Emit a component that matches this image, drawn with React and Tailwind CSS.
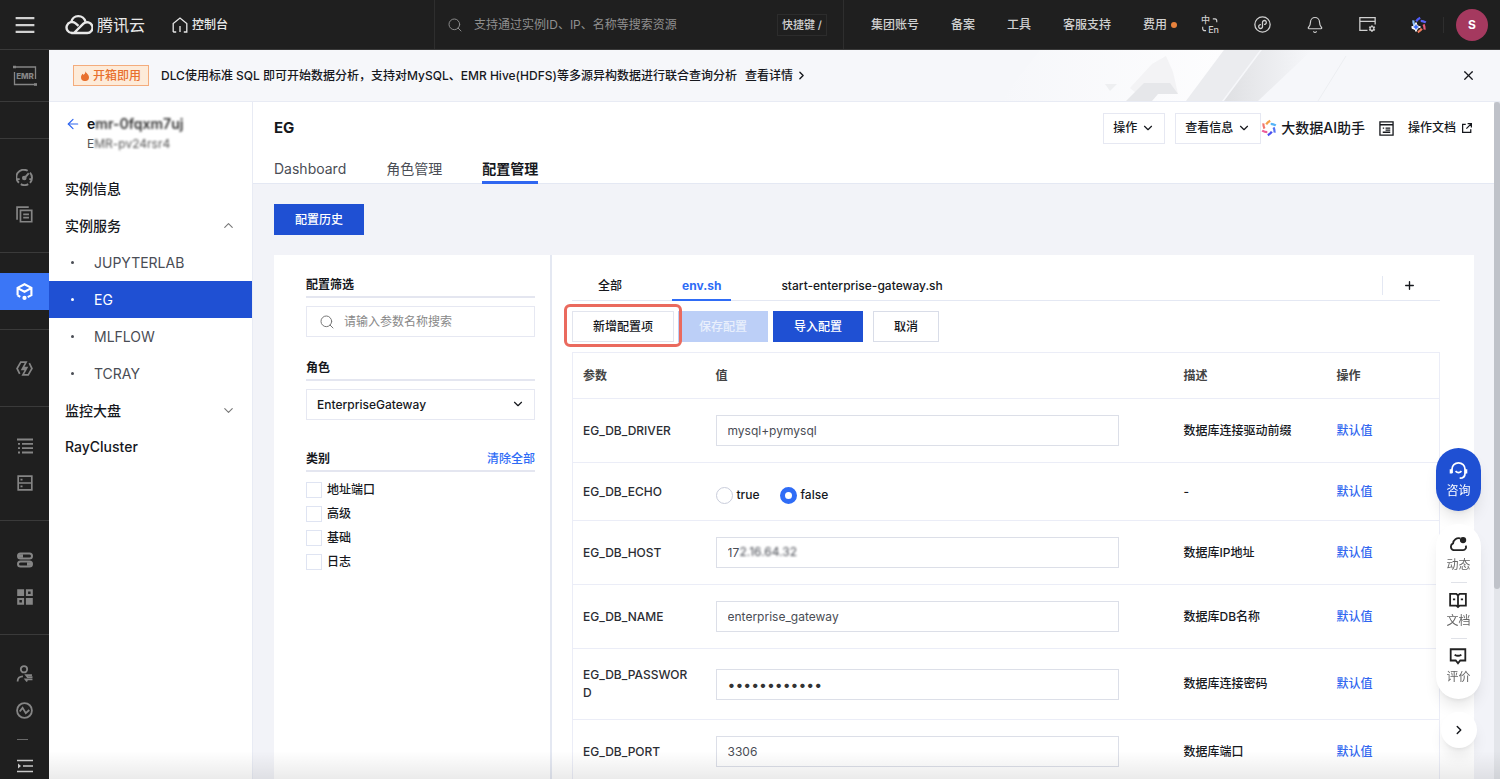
import { useState } from "react";
import {
  ArrowLeft,
  Bell,
  ChevronDown,
  ChevronRight,
  ChevronUp,
  Plus,
  Search,
  X,
} from "lucide-react";

const topLinks = ["集团账号", "备案", "工具", "客服支持"];

const services = ["JUPYTERLAB", "EG", "MLFLOW", "TCRAY"];

const categories = ["地址端口", "高级", "基础", "日志"];

const params = [
  { name: "EG_DB_DRIVER", value: "mysql+pymysql", desc: "数据库连接驱动前缀" },
  { name: "EG_DB_ECHO", type: "radio", desc: "-" },
  { name: "EG_DB_HOST", type: "masked", value: "172.16.64.32", desc: "数据库IP地址" },
  { name: "EG_DB_NAME", value: "enterprise_gateway", desc: "数据库DB名称" },
  { name: "EG_DB_PASSWORD", type: "password", value: "abcdefghijkl", desc: "数据库连接密码" },
  { name: "EG_DB_PORT", value: "3306", desc: "数据库端口" },
];

function Icon({ size = 16, width = 1.5, className, children }) {
  return (
    <svg
      width={size}
      height={size}
      viewBox="0 0 16 16"
      fill="none"
      stroke="currentColor"
      strokeWidth={width}
      className={className}
      aria-hidden="true"
    >
      {children}
    </svg>
  );
}

function CloudLogo() {
  return (
    <svg width="28" height="21" viewBox="0 0 28 21" fill="none" stroke="currentColor" strokeWidth="2.4" aria-hidden="true">
      <path d="M7 19a5.5 5.5 0 1 1 3.6-9.7L13.500 11.800" />
      <path d="M6.200 8.200a7.300 7.300 0 0 1 14.300-.4" />
      <path d="M9 19 18.400 9.700a5.400 5.400 0 1 1 3.200 9.300H6.600" />
    </svg>
  );
}

function HomeIcon() {
  return (
    <Icon size={16} width={1.3}>
      <path d="M1.200 15V6.500L8 1l6.800 5.500V15h-3M1.200 15h3M8 15V9" />
    </Icon>
  );
}

function AiIcon({ dark }) {
  const colors = dark
    ? ["#4f5bf5", "#5a62f7", "#e85a78", "#f07a5a", "#ffffff", "#8fc4ff"]
    : ["#f4a04a", "#55b4f7", "#5573f2", "#4a4ff0", "#ee5c98", "#f2766c"];
  return (
    <svg width="16" height="18" viewBox="0 0 16 18" fill="none" strokeWidth="2.2" aria-hidden="true">
      {colors.map((color, i) => (
        <path
          key={i}
          d="M5.200 5.400Q6.500 3.200 9.200 1.800"
          stroke={color}
          transform={`rotate(${i * 60} 8 9)`}
        />
      ))}
      {dark ? (
        <path
          d="M5 6.500 6.300 9.700 9.500 11 6.300 12.300 5 15.500 3.700 12.300.5 11 3.700 9.700Z"
          fill="#3a6cf8"
          stroke="#fff"
          strokeWidth="1"
        />
      ) : null}
    </svg>
  );
}

const railSections = [
  [
    {
      label: "概览",
      icon: (
        <Icon size={17} width={1.800}>
          <path d="M2.800 13A7 7 0 0 1 11 1.700M13.200 3.500a7 7 0 0 1 0 9.500M4.500 14.200a7 7 0 0 0 7 0M1 9.500h2.500M12.500 9.500H15" />
          <circle cx="7.800" cy="8.500" r="1.300" fill="currentColor" />
          <path d="M8.500 7.800 12 4" />
        </Icon>
      ),
    },
    {
      label: "文档",
      icon: (
        <Icon size={17} width={1.600}>
          <path d="M1 13V1h11M4.200 4.200h10.600v10.600H4.200ZM6.800 7.800h5.400M6.800 11h5.400" />
        </Icon>
      ),
    },
  ],
  [
    {
      label: "集群",
      active: true,
      icon: (
        <Icon size={17} width={2}>
          <path d="M1.500 11.500V4.500L8 1.200l6.500 3.300v7L11 13.300M1.500 11.500 4 13M2 5l6 3.200L14 5" />
          <circle cx="8" cy="14" r="1" fill="currentColor" />
        </Icon>
      ),
    },
  ],
  [
    {
      label: "作业",
      icon: (
        <Icon size={17} width={1.600}>
          <path d="M3.500 13 1 8l3.500-6h5L5.800 8.800h3M12.500 3 15 8l-3.500 6h-5l3.700-6.800h-3" />
        </Icon>
      ),
    },
  ],
  [
    {
      label: "列表",
      icon: (
        <Icon size={16} width={1.800}>
          <path d="M0 1.500h16M5 5.800h11M5 10.200h11M5 14.500h11M1 5.800h2M1 10.200h2M1 14.500h2" />
        </Icon>
      ),
    },
    {
      label: "存储",
      icon: (
        <Icon size={16} width={1.700}>
          <path d="M1.200 1.200h13.600v13.600H1.200ZM1.200 8h13.600M3.500 4.600h2M3.500 11.400h2" />
        </Icon>
      ),
    },
  ],
  [
    {
      label: "开关",
      icon: (
        <Icon size={16} width={2}>
          <rect x="1" y="1.500" width="14" height="5" rx="2.500" />
          <rect x="1" y="9.500" width="14" height="5" rx="2.500" />
          <path d="M2 4h4M10 12h4" strokeWidth="3.500" />
        </Icon>
      ),
    },
    {
      label: "组件",
      icon: (
        <Icon size={16} width={2.200}>
          <path d="M1.300 1.300h4.700v4.700H1.300ZM10 10h4.700v4.700H10Z" fill="currentColor" />
          <path d="M10 1.300h4.700v4.700H10ZM1.300 10h4.700v4.700H1.300Z" />
        </Icon>
      ),
    },
  ],
  [
    {
      label: "用户",
      icon: (
        <Icon size={17} width={1.700}>
          <circle cx="7.500" cy="4" r="3" />
          <path d="M1.500 15.500c0-3 2-4.800 5-4.800M15 9.500H9.500l1.500 2h4.500M15.500 13.500H9l1.500 2" />
        </Icon>
      ),
    },
    {
      label: "监控",
      icon: (
        <Icon size={17} width={1.700}>
          <circle cx="8" cy="8" r="7" />
          <path d="M3.500 9 6.200 5.500 9.200 10.500 12.500 7.500" />
        </Icon>
      ),
    },
  ],
];

function TopBar() {
  return (
    <header className="flex h-[50px] shrink-0 items-center border-b border-[#3a3a3a] bg-[#1f1f1f] text-xs font-medium text-[#d0d0d0]">
      <div className="flex h-full w-[435px] shrink-0 items-center border-r border-[#2e2e2e]">
        <button type="button" aria-label="菜单" className="flex w-[49px] justify-center">
          <Icon size={20} width={1.800}>
            <path d="M.5 2.500h15M.5 8h15M.5 13.500h15" />
          </Icon>
        </button>
        <a href="#home" className="ml-4 flex items-center gap-1 text-[#e8e8e8]">
          <CloudLogo />
          <span className="text-base font-normal">腾讯云</span>
        </a>
        <a href="#console" className="ml-[27px] flex items-center gap-1 text-[#e8e8e8]">
          <HomeIcon />
          控制台
        </a>
      </div>
      <label className="flex h-full flex-1 items-center border-r border-[#2e2e2e] pr-4 pl-3">
        <Search size={16} strokeWidth={1.500} className="text-[#8a8a8a]" />
        <input
          aria-label="搜索资源"
          placeholder="支持通过实例ID、IP、名称等搜索资源"
          className="ml-[11px] min-w-0 flex-1 bg-transparent font-normal outline-none placeholder:text-[#8f8f8f]"
        />
        <kbd className="border border-[#2c2c2c] px-1 py-[2px] font-[inherit] text-[11px] leading-4">快捷键 /</kbd>
      </label>
      <nav className="flex shrink-0 items-center gap-8 pl-[27px] whitespace-nowrap">
        {topLinks.map((link) => (
          <a key={link} href="#nav">
            {link}
          </a>
        ))}
        <a href="#fee" className="flex items-center gap-1">
          费用
          <span className="size-[6px] rounded-full bg-[#e8823c]" />
        </a>
      </nav>
      <div className="ml-6 flex shrink-0 items-center pr-3">
        <div className="flex items-center gap-[35px]">
          <button type="button" aria-label="切换语言" className="relative size-[18px]">
            <span className="absolute -top-[2px] left-0 text-[9px] leading-3">中</span>
            <span className="absolute right-0 -bottom-[2px] text-[9px] leading-3">En</span>
            <Icon size={18} width={1} className="absolute inset-0">
              <path d="M10.500 2.500h2q1.500 0 1.500 2v1M1.500 9.500v1.500q0 2 2 2h1" />
            </Icon>
          </button>
          <button type="button" aria-label="小程序">
            <Icon size={17} width={1.200}>
              <circle cx="8" cy="8" r="7.200" />
              <path d="M6.500 8.200A1.800 1.800 0 1 0 8 10V6a1.800 1.800 0 1 1 1.500 1.800" />
            </Icon>
          </button>
          <button type="button" aria-label="消息">
            <Bell size={18} strokeWidth={1.600} />
          </button>
          <button type="button" aria-label="设置">
            <Icon size={17} width={1.200}>
              <path d="M8 13.500H.8v-12h14.400V8M.8 5h14.400" />
              <circle cx="12.200" cy="11.800" r="1.800" />
              <path d="M12.200 8.800V10M12.200 13.600v1.400M9.500 10.200l1 .6M14 12.800l1 .6M9.500 13.400l1-.6M14 10.800l1-.6" />
            </Icon>
          </button>
          <button type="button" aria-label="AI 助手">
            <AiIcon dark />
          </button>
        </div>
        <span className="mr-3 ml-4 h-4 w-px bg-[#2e2e2e]" />
        <button
          type="button"
          aria-label="账号"
          className="flex size-8 items-center justify-center rounded-full bg-[#a5395f] font-bold text-white"
        >
          S
        </button>
      </div>
    </header>
  );
}

function Rail() {
  return (
    <aside className="flex w-[49px] shrink-0 flex-col bg-[#1f1f1f] text-[#858585]">
      <div className="flex h-[52px] shrink-0 items-center justify-center border-b border-[#3a3a3a]">
        <svg width="24" height="22" viewBox="0 0 24 22" fill="none" stroke="currentColor" strokeWidth="1.300" aria-hidden="true">
          <path d="M0 2h22.500v12M1.500 7v12.500H24" />
          <path d="M0 2h3M21 19.500h3" strokeWidth="2.500" />
          <text x="12" y="14" textAnchor="middle" fill="currentColor" stroke="none" fontSize="8" fontWeight="800">
            EMR
          </text>
        </svg>
      </div>
      <div className="h-[37px] shrink-0 border-b border-[#3a3a3a]" />
      {railSections.map((section, i) => (
        <div
          key={i}
          className="shrink-0 border-b border-[#3a3a3a] pt-5 pb-[19px] last-of-type:border-0 last-of-type:pb-[10px]"
        >
          {section.map((item) => (
            <button
              key={item.label}
              type="button"
              aria-label={item.label}
              className={
                item.active
                  ? "flex h-[37px] w-full items-center justify-center bg-[#3b76f6] text-white"
                  : "flex h-[37px] w-full items-center justify-center"
              }
            >
              {item.icon}
            </button>
          ))}
        </div>
      ))}
      <span className="ml-[17px] h-px w-[11px] shrink-0 bg-[#6a6a6a]" />
      <button type="button" aria-label="展开" className="mt-[18px] flex shrink-0 justify-center text-[#c8c8c8]">
        <Icon size={16} width={1.600}>
          <path d="M0 2.500h16M6 8h10M0 13.500h16" />
          <path d="M1 5.500v5L4 8Z" fill="currentColor" stroke="none" />
        </Icon>
      </button>
    </aside>
  );
}

function Banner({ onClose }) {
  return (
    <section className="relative flex h-[52px] shrink-0 items-center border-b border-[#e8ebf4] bg-[#f6f7fa] px-6 text-xs font-medium">
      <svg
        className="absolute inset-y-0 right-[120px]"
        width="380"
        height="51"
        viewBox="0 0 380 51"
        aria-hidden="true"
      >
        <defs>
          <linearGradient id="glow">
            <stop offset="0" stopColor="#f6f7fa" />
            <stop offset="1" stopColor="#fdfdfe" />
          </linearGradient>
          <linearGradient id="beam">
            <stop offset="0" stopColor="#dfe0e3" />
            <stop offset="1" stopColor="#f6f7fa" />
          </linearGradient>
        </defs>
        <path d="M40 0 0 51H186L224 0Z" fill="url(#glow)" />
        <path d="M130 38 152 14 166 6 173 22 178 44 160 36 146 51Z" fill="#f3f3f5" />
        <path d="m126 51 18-18h26l8 11h-20l-6 7Z" fill="#e6e7ea" />
        <path d="M105 34h12l-7 7Z" fill="#eeeff1" />
        <path d="M186 51 224 0h36L222 51Z" fill="#ebecef" />
        <path d="M224 51 262 0h50L258 51Z" fill="url(#beam)" />
        <path d="m318 51 28-45" stroke="#eceef1" />
      </svg>
      <span className="flex h-[21px] items-center gap-1 border border-[#f4ac7c] bg-[#fdebd9] px-[7px] text-[#e8702e]">
        <svg width="8" height="10" viewBox="0 0 8 10" fill="currentColor" aria-hidden="true">
          <path d="M4.500 0c0 2 3.500 3.200 3.500 6.200A3.900 3.900 0 0 1 4 10 3.900 3.900 0 0 1 0 6.200C0 4.500 1 3.500 1.500 2.700c.6.3.9.800 1 1.300C3.600 3.200 4.500 2 4.500 0Z" />
        </svg>
        开箱即用
      </span>
      <p className="ml-3 whitespace-nowrap">
        DLC使用标准 SQL 即可开始数据分析，支持对MySQL、EMR Hive(HDFS)等多源异构数据进行联合查询分析
      </p>
      <a href="#detail" className="ml-2 flex items-center gap-[2px] whitespace-nowrap">
        查看详情
        <ChevronRight size={13} strokeWidth={2.500} />
      </a>
      <button type="button" aria-label="关闭" onClick={onClose} className="relative ml-auto">
        <X size={15} strokeWidth={2} />
      </button>
    </section>
  );
}

function SideNav() {
  const [service, setService] = useState("EG");

  return (
    <nav className="w-[204px] shrink-0 border-r border-[#e8ebf4] bg-white text-sm">
      <div className="flex h-[68px] gap-[6px] pt-[13px] pl-4">
        <a href="#back" aria-label="返回" className="mt-[1px] text-[#2f66f0]">
          <ArrowLeft size={16} strokeWidth={1.800} />
        </a>
        <div>
          <p className="text-[14px] leading-[18px] font-semibold">
            e<span className="text-[#333] blur-[1px]">mr-0fqxm7uj</span>
          </p>
          <p className="text-xs leading-[22px] text-[#555]">
            E<span className="blur-[1px]">MR-pv24rsr4</span>
          </p>
        </div>
      </div>
      <a href="#info" className="flex h-[37px] items-center px-4 font-medium">
        实例信息
      </a>
      <button type="button" className="flex h-[37px] w-full items-center justify-between px-4 font-medium">
        实例服务
        <ChevronUp size={15} strokeWidth={1.800} className="text-[#777]" />
      </button>
      {services.map((name) => (
        <button
          key={name}
          type="button"
          onClick={() => setService(name)}
          className={
            name === service
              ? "flex h-[37px] w-full items-center gap-5 bg-[#1f50d3] pl-[22px] text-white"
              : "flex h-[37px] w-full items-center gap-5 pl-[22px] text-[#4a4d55]"
          }
        >
          <span className="size-[3px] rounded-full bg-current" />
          {name}
        </button>
      ))}
      <button type="button" className="flex h-[37px] w-full items-center justify-between px-4 font-medium">
        监控大盘
        <ChevronDown size={15} strokeWidth={1.800} className="text-[#777]" />
      </button>
      <a href="#ray" className="flex h-[36px] items-center px-4 font-medium">
        RayCluster
      </a>
    </nav>
  );
}

function PageHeader() {
  return (
    <div className="border-b border-[#e4e8f3] bg-white pr-[22px] pl-[21px]">
      <div className="flex h-[52px] items-center">
        <h1 className="text-[15px] font-bold">EG</h1>
        <div className="ml-auto flex items-center text-xs font-medium">
          <button type="button" className="flex h-[31px] items-center gap-1 border border-[#e6e8f2] px-[9px]">
            操作
            <ChevronDown size={14} />
          </button>
          <button type="button" className="ml-[10px] flex h-[31px] items-center gap-1 border border-[#e6e8f2] px-[9px]">
            查看信息
            <ChevronDown size={14} />
          </button>
          <a href="#ai" className="flex items-center gap-1 text-sm">
            <AiIcon />
            大数据AI助手
          </a>
          <button type="button" aria-label="面板" className="mx-[14px]">
            <Icon size={15} width={1.400}>
              <path d="M1 1h14v14H1ZM1 4h14M4 7.500h1.500M7 7.500h5M7 9.700h5M4 12h8" />
            </Icon>
          </button>
          <a href="#docs" className="flex items-center gap-[6px]">
            操作文档
            <Icon size={10} width={2}>
              <path d="M6 2H1v13h13v-5M9 1h6v6M15 1 7 9" />
            </Icon>
          </a>
        </div>
      </div>
      <div role="tablist" className="flex h-[29px] gap-10 text-sm text-[#4a4d55]">
        <button type="button" role="tab" className="pt-px">
          Dashboard
        </button>
        <button type="button" role="tab" className="pt-px">
          角色管理
        </button>
        <button
          type="button"
          role="tab"
          aria-selected="true"
          className="-mb-px border-b-[3px] border-[#2f66f0] pt-[3px] font-bold text-[#16181d]"
        >
          配置管理
        </button>
      </div>
    </div>
  );
}

function FilterPanel() {
  return (
    <section className="w-[278px] shrink-0 border-r-2 border-[#e4e8f2] pt-[21px] pr-[15px] pl-8 text-xs">
      <h2 className="border-b-2 border-[#e4e6f0] pb-[2px] leading-[18px] font-bold">配置筛选</h2>
      <label className="mt-2 flex h-[31px] items-center border border-[#e6e8f2] px-3">
        <Search size={16} strokeWidth={1.500} className="text-[#777]" />
        <input
          aria-label="参数名称"
          placeholder="请输入参数名称搜索"
          className="ml-[9px] min-w-0 flex-1 outline-none placeholder:text-[#888]"
        />
      </label>
      <h2 className="mt-[22px] border-b-2 border-[#e4e6f0] pb-[2px] leading-[18px] font-bold">角色</h2>
      <div className="relative mt-2">
        <select
          aria-label="角色"
          className="h-[31px] w-full appearance-none border border-[#e6e8f2] px-[10px] font-medium"
        >
          <option>EnterpriseGateway</option>
        </select>
        <ChevronDown size={14} className="pointer-events-none absolute top-2 right-[10px]" />
      </div>
      <div className="mt-[30px] flex justify-between border-b-2 border-[#e4e6f0] pb-[2px] leading-[18px]">
        <h2 className="font-bold">类别</h2>
        <button type="button" className="font-medium text-[#2f6cf6]">
          清除全部
        </button>
      </div>
      <div className="mt-[10px] flex flex-col gap-2">
        {categories.map((category) => (
          <label key={category} className="flex h-4 items-center gap-[5px] font-medium">
            <input type="checkbox" className="size-4 appearance-none border border-[#dfe4f2] checked:bg-[#2f6cf6]" />
            {category}
          </label>
        ))}
      </div>
    </section>
  );
}

function ParamField({ param }) {
  if (param.type === "radio") {
    return (
      <div className="flex items-center gap-5 pt-[7px] font-medium">
        {["true", "false"].map((option) => (
          <label key={option} className="flex h-[18px] items-center gap-1">
            <input
              type="radio"
              name={param.name}
              defaultChecked={option === "false"}
              className="size-[17px] appearance-none rounded-full border border-[#c9cddb] checked:border-[5px] checked:border-[#2f6cf6]"
            />
            {option}
          </label>
        ))}
      </div>
    );
  }

  if (param.type === "masked") {
    return (
      <div className="relative">
        <input
          aria-label={param.name}
          defaultValue="17"
          className="h-[31px] w-full border border-[#dcdfe8] px-[11px] text-[#4a4d55]"
        />
        <span className="pointer-events-none absolute top-[7px] left-6 leading-4 text-[#4a4d55] blur-[1px]">
          {param.value.slice(2)}
        </span>
      </div>
    );
  }

  return (
    <input
      type={param.type || "text"}
      aria-label={param.name}
      defaultValue={param.value}
      className={
        param.type === "password"
          ? "h-[31px] w-full border border-[#dcdfe8] px-[11px] text-sm text-[#333]"
          : "h-[31px] w-full border border-[#dcdfe8] px-[11px] text-[#4a4d55]"
      }
    />
  );
}

function ConfigTable() {
  return (
    <table className="mt-[10px] w-full table-fixed border-collapse border border-[#ebedf7] text-left text-xs">
      <thead>
        <tr className="h-[46px] border-b border-[#ebedf7] text-[#444]">
          <th className="w-[133px] px-[10px] font-bold">参数</th>
          <th className="px-[10px] font-bold">值</th>
          <th className="w-[153px] px-[10px] font-bold">描述</th>
          <th className="w-[113px] px-[10px] font-bold">操作</th>
        </tr>
      </thead>
      <tbody>
        {params.map((param) => (
          <tr key={param.name} className="border-b border-[#ebedf7]">
            <td className="px-[10px] py-[17px] leading-[18px] font-medium break-all text-[#2b2d33]">{param.name}</td>
            <td className="py-4 pr-[55px] pl-[10px]">
              <ParamField param={param} />
            </td>
            <td className="px-[10px] font-medium">{param.desc}</td>
            <td className="px-[10px]">
              <button type="button" className="font-medium text-[#2f66f0]">
                默认值
              </button>
            </td>
          </tr>
        ))}
      </tbody>
    </table>
  );
}

function ConfigPanel() {
  return (
    <section className="min-w-0 flex-1 pt-[15px] pr-[34px] pl-5 text-xs">
      <div className="flex h-[31px] border-b border-[#e4e8f3]">
        <div role="tablist" className="ml-4 flex gap-10">
          <button type="button" role="tab" className="px-[10px] pt-px font-medium">
            全部
          </button>
          <button
            type="button"
            role="tab"
            aria-selected="true"
            className="-mb-px border-b-2 border-[#2f6cf6] px-[10px] pt-[2px] font-bold text-[#2f6cf6]"
          >
            env.sh
          </button>
          <button type="button" role="tab" className="px-[10px] pt-px font-medium">
            start-enterprise-gateway.sh
          </button>
        </div>
        <button
          type="button"
          aria-label="添加文件"
          className="mt-[6px] ml-auto flex h-[19px] w-[58px] items-center border-l border-[#e4e8f3] pl-5"
        >
          <Plus size={13} strokeWidth={2.500} />
        </button>
      </div>
      <div className="mt-[10px] flex h-[31px] font-medium">
        <div className="relative">
          <button type="button" className="h-full border border-[#e2e5ee] px-5">
            新增配置项
          </button>
          <span className="pointer-events-none absolute -inset-x-2 -top-[7px] -bottom-[5px] z-10 rounded-md border-[3px] border-[#ea6a5e]" />
        </div>
        <button type="button" disabled className="ml-1 bg-[#bccff7] px-[21px] text-[#e9effc]">
          保存配置
        </button>
        <button type="button" className="ml-[5px] bg-[#1f50d3] px-[21px] text-white">
          导入配置
        </button>
        <button type="button" className="ml-[10px] border border-[#d9dde8] px-5">
          取消
        </button>
      </div>
      <ConfigTable />
    </section>
  );
}

function FloatingTools() {
  return (
    <div className="fixed right-[19px] bottom-[31px] z-20 flex w-[45px] flex-col items-center text-xs">
      <button
        type="button"
        className="flex h-[63px] w-full flex-col items-center justify-center gap-[3px] rounded-full bg-[#1f50d3] text-white shadow-lg"
      >
        <Icon size={19} width={1.500}>
          <path d="M2.500 10V7a5.500 5.500 0 0 1 11 0v3c0 2.500-1.500 4.500-4.500 4.500" />
          <path d="M1.700 7v3.500M14.300 7v3.500" strokeWidth="2.200" />
          <path d="M5.500 8.500q2.500 2.500 5 0" />
        </Icon>
        咨询
      </button>
      <div className="mt-[13px] flex h-[175px] w-full flex-col items-center rounded-full bg-white pt-[11px] text-[#666] shadow-lg">
        <button type="button" className="flex flex-col items-center gap-1 leading-4">
          <Icon size={18} width={1.600} className="text-[#222]">
            <path d="M10 3A5 5 0 0 0 3.600 7.500 3.200 3.200 0 0 0 4 13.500h8.500a2.700 2.700 0 0 0 2.300-4" />
            <circle cx="12.500" cy="4.500" r="2" fill="currentColor" />
          </Icon>
          动态
        </button>
        <span className="mt-[9px] mb-2 h-px w-4 bg-[#e0e2e8]" />
        <button type="button" className="flex flex-col items-center gap-1 leading-4">
          <Icon size={18} width={1.600} className="text-[#222]">
            <path d="M1 2.500h5.500L8 4l1.500-1.500H15v10.500H9.500L8 14.200 6.500 13H1ZM8 4v10M3.500 7.500h2M10.500 7.500h2" />
          </Icon>
          文档
        </button>
        <span className="mt-[9px] mb-2 h-px w-4 bg-[#e0e2e8]" />
        <button type="button" className="flex flex-col items-center gap-1 leading-4">
          <Icon size={18} width={1.600} className="text-[#222]">
            <path d="M1.500 2h13v10H10l-2 2.500L6 12H1.500ZM5 6.800q3 2 6 0" />
          </Icon>
          评价
        </button>
      </div>
      <button
        type="button"
        aria-label="收起"
        className="mt-[13px] flex size-9 items-center justify-center rounded-full bg-white shadow-lg"
      >
        <ChevronRight size={14} strokeWidth={2.500} />
      </button>
    </div>
  );
}

export default function App() {
  const [showBanner, setShowBanner] = useState(true);

  return (
    <div className="relative flex h-screen flex-col overflow-hidden bg-[#f2f3f8] font-['Inter','Noto_Sans_CJK_SC',sans-serif] text-[#16181d]">
      <TopBar />
      <div className="flex min-h-0 flex-1">
        <Rail />
        <div className="flex min-w-0 flex-1 flex-col">
          {showBanner ? <Banner onClose={() => setShowBanner(false)} /> : null}
          <div className="flex min-h-0 flex-1">
            <SideNav />
            <main className="min-w-0 flex-1 overflow-hidden">
              <PageHeader />
              <div className="pt-5 pr-5 pl-[21px]">
                <button type="button" className="h-[31px] bg-[#1f50d3] px-[21px] text-xs font-medium text-white">
                  配置历史
                </button>
                <div className="mt-5 flex bg-white">
                  <FilterPanel />
                  <ConfigPanel />
                </div>
              </div>
            </main>
            <div className="w-[6px] shrink-0 bg-[#e3e5ea]">
              <div className="h-[72%] rounded-full bg-[#bfc2c9]" />
            </div>
          </div>
        </div>
      </div>
      <FloatingTools />
      <div className="pointer-events-none absolute right-0 bottom-0 left-[49px] h-7 bg-linear-to-t from-black/8 to-transparent" />
    </div>
  );
}
